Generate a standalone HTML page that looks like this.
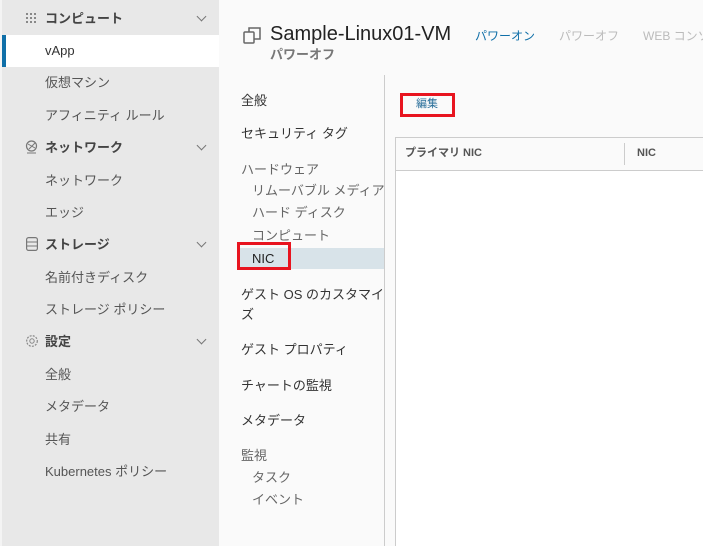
<!DOCTYPE html><html style="width:703px;height:546px;overflow:hidden"><head><meta charset="utf-8"><style>
*{margin:0;padding:0;box-sizing:border-box}
body{width:703px;height:546px;overflow:hidden;background:#fafafa;font-family:"Liberation Sans","Noto Sans CJK JP",sans-serif;position:relative;color:#333}
.a{position:absolute;white-space:nowrap;line-height:1}
#sb{position:absolute;left:0;top:0;width:219px;height:546px;background:#e8e8e8;border-left:2px solid #f4f4f4}
.s{font-size:13px;color:#555;left:45px}
.h{font-size:13px;font-weight:bold;color:#444;left:45px}
.chev{position:absolute;left:198px;width:7px;height:7px;border-right:1.3px solid #777;border-bottom:1.3px solid #777;transform:rotate(45deg)}
.n{font-size:13px;color:#333;left:241px}
.g{font-size:13px;color:#666}
</style></head><body>
<div id="sb"></div>
<div class="a" style="left:2px;top:35px;width:217px;height:32px;background:#fff"></div>
<div class="a" style="left:2px;top:35px;width:4px;height:32px;background:#0f6fa8"></div>
<svg class="a" style="left:26px;top:13px" width="12" height="11"><g fill="#888"><rect x="0" y="0" width="2" height="2"/><rect x="4" y="0" width="2" height="2"/><rect x="8" y="0" width="2" height="2"/><rect x="0" y="4" width="2" height="2"/><rect x="4" y="4" width="2" height="2"/><rect x="8" y="4" width="2" height="2"/><rect x="0" y="8" width="2" height="2"/><rect x="4" y="8" width="2" height="2"/><rect x="8" y="8" width="2" height="2"/></g></svg>
<div class="a h" style="top:12px">コンピュート</div><div class="chev" style="top:13px"></div>
<div class="a s" style="top:44px;color:#333">vApp</div>
<div class="a s" style="top:76px">仮想マシン</div>
<div class="a s" style="top:109px">アフィニティ ルール</div>
<svg class="a" style="left:25px;top:140px" width="13" height="14"><circle cx="6.5" cy="6" r="5" fill="none" stroke="#777" stroke-width="1.2"/><path d="M3 4l7 4M4 9l6-6M2 13h9" stroke="#777" stroke-width="1" fill="none"/></svg>
<div class="a h" style="top:141px">ネットワーク</div><div class="chev" style="top:142px"></div>
<div class="a s" style="top:174px">ネットワーク</div>
<div class="a s" style="top:206px">エッジ</div>
<svg class="a" style="left:26px;top:237px" width="12" height="14"><rect x="0.6" y="0.6" width="10.8" height="12.8" rx="2" fill="none" stroke="#777" stroke-width="1.2"/><path d="M1 5h10M1 9h10" stroke="#777"/></svg>
<div class="a h" style="top:238px">ストレージ</div><div class="chev" style="top:239px"></div>
<div class="a s" style="top:271px">名前付きディスク</div>
<div class="a s" style="top:303px">ストレージ ポリシー</div>
<svg class="a" style="left:25px;top:334px" width="14" height="14"><circle cx="7" cy="7" r="5.3" fill="none" stroke="#888" stroke-width="1.2" stroke-dasharray="2 1.2"/><circle cx="7" cy="7" r="2.2" fill="none" stroke="#888"/></svg>
<div class="a h" style="top:335px">設定</div><div class="chev" style="top:336px"></div>
<div class="a s" style="top:368px">全般</div>
<div class="a s" style="top:400px">メタデータ</div>
<div class="a s" style="top:433px">共有</div>
<div class="a s" style="top:465px">Kubernetes ポリシー</div>

<svg class="a" style="left:243px;top:26px" width="18" height="19"><rect x="1" y="6" width="10" height="11" rx="1" fill="none" stroke="#666" stroke-width="1.5"/><path d="M6 6V2h11v11h-6" fill="none" stroke="#666" stroke-width="1.5"/></svg>
<div class="a" style="left:270px;top:24px;font-size:20px;color:#222">Sample-Linux01-VM</div>
<div class="a" style="left:475px;top:30px;font-size:12px;color:#0f6fa8">パワーオン</div>
<div class="a" style="left:559px;top:30px;font-size:12px;color:#bbb">パワーオフ</div>
<div class="a" style="left:643px;top:30px;font-size:12px;color:#bbb">WEB コンソール</div>
<div class="a" style="left:270px;top:48px;font-size:13px;font-weight:bold;color:#777">パワーオフ</div>

<div class="a" style="left:384px;top:75px;width:1px;height:471px;background:#ccc"></div>
<div class="a n" style="top:94px">全般</div>
<div class="a n" style="top:127px">セキュリティ タグ</div>
<div class="a g" style="left:241px;top:163px">ハードウェア</div>
<div class="a g" style="left:252px;top:184px">リムーバブル メディア</div>
<div class="a g" style="left:252px;top:206px">ハード ディスク</div>
<div class="a g" style="left:252px;top:229px">コンピュート</div>
<div class="a" style="left:237px;top:248px;width:147px;height:21px;background:#d8e3e9"></div>
<div class="a" style="left:252px;top:252px;font-size:13px;color:#222">NIC</div>
<div class="a" style="left:237px;top:242px;width:54px;height:28px;border:3px solid #e8141f"></div>
<div class="a n" style="top:288px">ゲスト OS のカスタマイ</div>
<div class="a n" style="top:308px">ズ</div>
<div class="a n" style="top:343px">ゲスト プロパティ</div>
<div class="a n" style="top:379px">チャートの監視</div>
<div class="a n" style="top:414px">メタデータ</div>
<div class="a g" style="left:241px;top:449px">監視</div>
<div class="a g" style="left:252px;top:471px">タスク</div>
<div class="a g" style="left:252px;top:493px">イベント</div>

<div class="a" style="left:400px;top:93px;width:55px;height:24px;border:3px solid #e8141f"></div>
<div class="a" style="left:416px;top:99px;font-size:11px;color:#2a6f9a">編集</div>

<div class="a" style="left:395px;top:137px;width:308px;height:409px;background:#fff;border-left:1px solid #ccc;border-top:1px solid #ccc"></div>
<div class="a" style="left:396px;top:138px;width:307px;height:33px;background:#fafafa;border-bottom:1px solid #ccc"></div>
<div class="a" style="left:405px;top:148px;font-size:11px;font-weight:bold;color:#555">プライマリ NIC</div>
<div class="a" style="left:624px;top:143px;width:1px;height:22px;background:#ccc"></div>
<div class="a" style="left:637px;top:148px;font-size:11px;font-weight:bold;color:#555">NIC</div>
</body></html>
